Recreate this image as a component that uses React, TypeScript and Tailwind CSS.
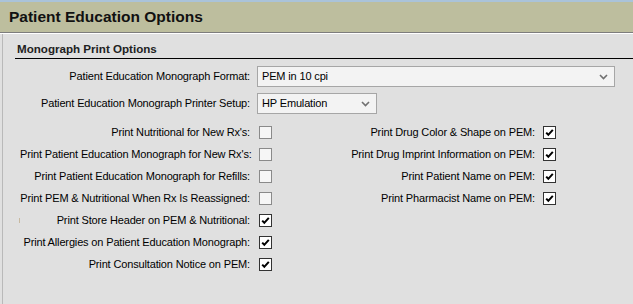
const leftRows: { label: string; checked: boolean; mark?: boolean }[] = [
  { label: "Print Nutritional for New Rx's:", checked: false },
  { label: "Print Patient Education Monograph for New Rx's:", checked: false },
  { label: 'Print Patient Education Monograph for Refills:', checked: false },
  { label: 'Print PEM & Nutritional When Rx Is Reassigned:', checked: false },
  { label: 'Print Store Header on PEM & Nutritional:', checked: true, mark: true },
  { label: 'Print Allergies on Patient Education Monograph:', checked: true },
  { label: 'Print Consultation Notice on PEM:', checked: true },
]

const rightRows = [
  'Print Drug Color & Shape on PEM:',
  'Print Drug Imprint Information on PEM:',
  'Print Patient Name on PEM:',
  'Print Pharmacist Name on PEM:',
]

function Checkbox({ checked }: { checked: boolean }) {
  return (
    <div
      className={`w-[13px] h-[13px] shrink-0 border ${
        checked ? 'border-[#333333] bg-white' : 'border-[#8a8a8a] bg-[#f6f6f6]'
      }`}
    >
      {checked && (
        <svg width="11" height="11" viewBox="0 0 11 11" className="block">
          <polyline points="2.2,5.6 4.3,7.8 8.8,2.8" fill="none" stroke="#000" strokeWidth="2" />
        </svg>
      )}
    </div>
  )
}

function Chevron() {
  return (
    <svg width="9" height="6" viewBox="0 0 9 6" className="block">
      <polyline points="1,1 4.5,4.5 8,1" fill="none" stroke="#707070" strokeWidth="1.6" />
    </svg>
  )
}

function Select({ value, width }: { value: string; width: string }) {
  return (
    <div
      className={`${width} h-[21px] border border-[#a6a6a6] bg-[#f3f3f3] flex items-center justify-between pl-[4px] pr-[6px]`}
    >
      <span>{value}</span>
      <Chevron />
    </div>
  )
}

export default function App() {
  return (
    <div
      className="w-[633px] h-[304px] overflow-hidden bg-[#e0e0e0] text-[11px] tracking-[-0.15px] text-black whitespace-nowrap"
      style={{ fontFamily: '"Liberation Sans", Arial, sans-serif' }}
    >
      <div className="h-[2px] bg-[#aac3d9]" />
      <div className="h-[31px] bg-[#bdbe9e] border-b border-[#7d7d7d] flex items-center pl-[9px]">
        <span className="text-[15.5px] tracking-normal font-bold text-[#111]">Patient Education Options</span>
      </div>
      <div className="h-[1px] bg-white" />

      <div className="ml-[2px] border-l border-[#b9b9b9] h-[270px]">
        {/* Section header */}
        <div className="ml-[12px] pt-[8px] pb-[2px] pl-[2px] border-b border-black leading-[14px]">
          <span className="font-bold text-[11.6px] tracking-normal text-[#222]">Monograph Print Options</span>
        </div>

        {/* Selects */}
        <div className="mt-[7px] flex items-center">
          <span className="w-[247px] text-right">Patient Education Monograph Format:</span>
          <div className="ml-[7px]">
            <Select value="PEM in 10 cpi" width="w-[358px]" />
          </div>
        </div>
        <div className="mt-[6px] flex items-center">
          <span className="w-[247px] text-right">Patient Education Monograph Printer Setup:</span>
          <div className="ml-[7px]">
            <Select value="HP Emulation" width="w-[120px]" />
          </div>
        </div>

        {/* Checkbox grid */}
        <div className="mt-[7px] flex">
          <div className="w-[269px]">
            {leftRows.map((r) => (
              <div key={r.label} className="h-[22px] flex items-center">
                <div className="w-[247px] flex items-center justify-between">
                  <span className={`ml-[16px] w-[1px] h-[5px] shrink-0 ${r.mark ? 'bg-[#c8b9a0]' : ''}`} />
                  <span className="text-right">{r.label}</span>
                </div>
                <div className="ml-[9px]">
                  <Checkbox checked={r.checked} />
                </div>
              </div>
            ))}
          </div>
          <div>
            {rightRows.map((label) => (
              <div key={label} className="h-[22px] flex items-center">
                <span className="w-[263px] text-right">{label}</span>
                <div className="ml-[8px]">
                  <Checkbox checked />
                </div>
              </div>
            ))}
          </div>
        </div>
      </div>
    </div>
  )
}
